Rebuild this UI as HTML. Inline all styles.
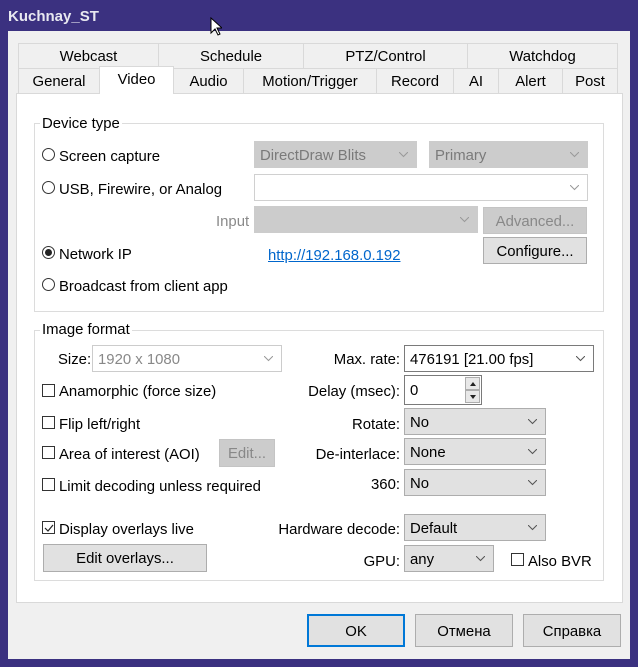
<!DOCTYPE html>
<html><head><meta charset="utf-8"><style>
*{margin:0;padding:0;box-sizing:border-box}
body{width:638px;height:667px;background:#3b3180;position:relative;overflow:hidden;font-family:"Liberation Sans",sans-serif;font-size:14.9px;color:#000}
.a{position:absolute}
.t{position:absolute;line-height:20px;white-space:nowrap;margin-top:2px}
.r{text-align:right}
.tab{position:absolute;background:#f0f0f0;border:1px solid #d9d9d9;text-align:center;line-height:27px}
.cb{position:absolute;height:27px;border:1px solid #adadad;background:#e1e1e1;line-height:28px;padding-left:5px;white-space:nowrap}
.cb svg{position:absolute;right:8px;top:10px}
.dis{background:#cccccc;border-color:#cccccc;color:#7a7a7a}
.btn{position:absolute;border:1px solid #adadad;background:#e1e1e1;text-align:center;line-height:28px}
.rad{position:absolute;width:13px;height:13px;border:1px solid #333;border-radius:50%}
.chk{position:absolute;width:13px;height:13px;border:1px solid #333;background:#fff}
.grp{position:absolute;border:1px solid #dcdcdc}
.gl{position:absolute;background:#fff;padding:0 2px;line-height:20px}
</style></head><body>
<div class="t" style="left:8px;top:5px;color:#e8e8f0;font-weight:bold;font-size:15px">Kuchnay_ST</div>
<div class="a" style="left:8px;top:31px;width:622px;height:628px;background:#f0f0f0"></div>
<!-- tabs row1 -->
<div class="tab" style="left:18px;top:43px;width:141px;height:26px">Webcast</div>
<div class="tab" style="left:158px;top:43px;width:146px;height:26px">Schedule</div>
<div class="tab" style="left:303px;top:43px;width:165px;height:26px">PTZ/Control</div>
<div class="tab" style="left:467px;top:43px;width:151px;height:26px">Watchdog</div>
<!-- panel -->
<div class="a" style="left:16px;top:93px;width:607px;height:510px;background:#fff;border:1px solid #d9d9d9"></div>
<div class="tab" style="left:18px;top:68px;width:82px;height:26px">General</div>
<div class="tab" style="left:99px;top:66px;width:75px;height:28px;background:#fff;border-bottom:none;line-height:27px">Video</div>
<div class="tab" style="left:173px;top:68px;width:71px;height:26px">Audio</div>
<div class="tab" style="left:243px;top:68px;width:134px;height:26px">Motion/Trigger</div>
<div class="tab" style="left:376px;top:68px;width:78px;height:26px">Record</div>
<div class="tab" style="left:453px;top:68px;width:46px;height:26px">AI</div>
<div class="tab" style="left:498px;top:68px;width:65px;height:26px">Alert</div>
<div class="tab" style="left:562px;top:68px;width:56px;height:26px">Post</div>

<!-- device type -->
<div class="grp" style="left:34px;top:123px;width:570px;height:189px"></div>
<div class="gl" style="left:40px;top:114px">Device type</div>
<div class="rad" style="left:42px;top:148px"></div><div class="t" style="left:59px;top:145px">Screen capture</div>
<div class="cb dis" style="left:254px;top:141px;width:163px">DirectDraw Blits<svg width="9" height="6"><polyline points="0,0 4.5,4.5 9,0" fill="none" stroke="#999"/></svg></div>
<div class="cb dis" style="left:429px;top:141px;width:159px">Primary<svg width="9" height="6"><polyline points="0,0 4.5,4.5 9,0" fill="none" stroke="#999"/></svg></div>
<div class="rad" style="left:42px;top:181px"></div><div class="t" style="left:59px;top:178px">USB, Firewire, or Analog</div>
<div class="cb" style="left:254px;top:174px;width:334px;background:#fff;border-color:#d0d0d0"><svg width="9" height="6"><polyline points="0,0 4.5,4.5 9,0" fill="none" stroke="#999"/></svg></div>
<div class="t" style="left:216px;top:210px;color:#8a8a8a">Input</div>
<div class="cb dis" style="left:254px;top:206px;width:224px"><svg width="9" height="6"><polyline points="0,0 4.5,4.5 9,0" fill="none" stroke="#999"/></svg></div>
<div class="btn" style="left:483px;top:207px;width:104px;height:27px;background:#cccccc;border-color:#c4c4c4;color:#888">Advanced...</div>
<div class="rad" style="left:42px;top:246px"><div class="a" style="left:2px;top:2px;width:7px;height:7px;border-radius:50%;background:#222"></div></div><div class="t" style="left:59px;top:243px">Network IP</div>
<div class="t" style="left:268px;top:244px;color:#0066cc;text-decoration:underline">http://192.168.0.192</div>
<div class="btn" style="left:483px;top:237px;width:104px;height:27px">Configure...</div>
<div class="rad" style="left:42px;top:278px"></div><div class="t" style="left:59px;top:275px">Broadcast from client app</div>

<!-- image format -->
<div class="grp" style="left:34px;top:330px;width:570px;height:251px"></div>
<div class="gl" style="left:40px;top:320px">Image format</div>
<div class="t" style="left:58px;top:348px">Size:</div>
<div class="cb" style="left:92px;top:345px;width:190px;background:#fff;border-color:#ccc;color:#888">1920 x 1080<svg width="9" height="6"><polyline points="0,0 4.5,4.5 9,0" fill="none" stroke="#999"/></svg></div>
<div class="t r" style="left:260px;width:140px;top:348px">Max. rate:</div>
<div class="cb" style="left:404px;top:345px;width:190px;background:#fff;border-color:#7a7a7a">476191 [21.00 fps]<svg width="9" height="6"><polyline points="0,0 4.5,4.5 9,0" fill="none" stroke="#555"/></svg></div>
<div class="chk" style="left:42px;top:384px"></div><div class="t" style="left:59px;top:380px">Anamorphic (force size)</div>
<div class="t r" style="left:260px;width:140px;top:380px">Delay (msec):</div>
<div class="a" style="left:404px;top:375px;width:78px;height:30px;border:1px solid #7a7a7a;background:#fff"></div>
<div class="t" style="left:410px;top:379px">0</div>
<div class="a" style="left:465px;top:377px;width:15px;height:13px;border:1px solid #adadad;background:#e8e8e8"><svg class="a" style="left:4px;top:4px" width="6" height="4"><polygon points="0,4 3,0 6,4" fill="#222"/></svg></div>
<div class="a" style="left:465px;top:390px;width:15px;height:13px;border:1px solid #adadad;background:#e8e8e8"><svg class="a" style="left:4px;top:4px" width="6" height="4"><polygon points="0,0 3,4 6,0" fill="#222"/></svg></div>
<div class="chk" style="left:42px;top:416px"></div><div class="t" style="left:59px;top:413px">Flip left/right</div>
<div class="t r" style="left:260px;width:140px;top:413px">Rotate:</div>
<div class="cb" style="left:404px;top:408px;width:142px">No<svg width="9" height="6"><polyline points="0,0 4.5,4.5 9,0" fill="none" stroke="#555"/></svg></div>
<div class="chk" style="left:42px;top:446px"></div><div class="t" style="left:59px;top:443px">Area of interest (AOI)</div>
<div class="btn" style="left:219px;top:439px;width:56px;height:28px;background:#cccccc;border-color:#c4c4c4;color:#888">Edit...</div>
<div class="t r" style="left:260px;width:140px;top:443px">De-interlace:</div>
<div class="cb" style="left:404px;top:438px;width:142px">None<svg width="9" height="6"><polyline points="0,0 4.5,4.5 9,0" fill="none" stroke="#555"/></svg></div>
<div class="chk" style="left:42px;top:478px"></div><div class="t" style="left:59px;top:475px">Limit decoding unless required</div>
<div class="t r" style="left:260px;width:140px;top:473px">360:</div>
<div class="cb" style="left:404px;top:469px;width:142px">No<svg width="9" height="6"><polyline points="0,0 4.5,4.5 9,0" fill="none" stroke="#555"/></svg></div>
<div class="chk" style="left:42px;top:521px"><svg class="a" style="left:1px;top:1px" width="10" height="10"><polyline points="1,5 4,8 9,2" fill="none" stroke="#222" stroke-width="1.2"/></svg></div><div class="t" style="left:59px;top:518px">Display overlays live</div>
<div class="t r" style="left:240px;width:160px;top:518px">Hardware decode:</div>
<div class="cb" style="left:404px;top:514px;width:142px">Default<svg width="9" height="6"><polyline points="0,0 4.5,4.5 9,0" fill="none" stroke="#555"/></svg></div>
<div class="btn" style="left:43px;top:544px;width:164px;height:28px">Edit overlays...</div>
<div class="t r" style="left:300px;width:100px;top:550px">GPU:</div>
<div class="cb" style="left:404px;top:545px;width:90px">any<svg width="9" height="6"><polyline points="0,0 4.5,4.5 9,0" fill="none" stroke="#555"/></svg></div>
<div class="chk" style="left:511px;top:553px"></div><div class="t" style="left:528px;top:550px">Also BVR</div>

<!-- bottom buttons -->
<div class="btn" style="left:307px;top:614px;width:98px;height:33px;border:2px solid #0078d7;line-height:33px">OK</div>
<div class="btn" style="left:415px;top:614px;width:98px;height:33px;line-height:35px">Отмена</div>
<div class="btn" style="left:523px;top:614px;width:98px;height:33px;line-height:35px">Справка</div>
<svg class="a" style="left:210px;top:17px" width="12" height="19"><polygon points="1,1 1,16 5,12 8,18 10,17 7,11 12,11" fill="#fff" stroke="#000"/></svg>
</body></html>
